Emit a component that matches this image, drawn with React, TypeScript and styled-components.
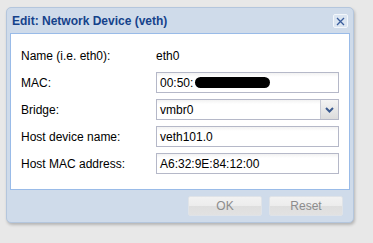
import React from 'react';
import styled, { createGlobalStyle } from 'styled-components';

const GlobalStyle = createGlobalStyle`
  html, body {
    margin: 0;
    padding: 0;
    background: #e8e8e8;
    font-family: "Liberation Sans", Arial, sans-serif;
  }
`;

const Page = styled.div`
  width: 373px;
  height: 243px;
  padding: 7px 0 0 6px;
  box-sizing: border-box;
`;

const Window = styled.div`
  width: 348px;
  height: 216px;
  box-sizing: border-box;
  background: #cfdbea;
  border: 1px solid #b4c6dd;
  border-radius: 5px;
  box-shadow: 1px 2px 3px rgba(0, 0, 0, 0.22);
  display: flex;
  flex-direction: column;
`;

const Header = styled.div`
  height: 25px;
  display: flex;
  align-items: center;
  justify-content: space-between;
  padding: 1px 5px 0 5px;
  box-sizing: border-box;
`;

const Title = styled.span`
  font-size: 12px;
  font-weight: bold;
  color: #15428b;
`;

const CloseButton = styled.button`
  width: 15px;
  height: 14px;
  padding: 0;
  border: 1px solid #f2f6fb;
  border-radius: 2px;
  background: #dbe5f1;
  display: flex;
  align-items: center;
  justify-content: center;
  cursor: pointer;
`;

const Body = styled.div`
  margin: 0 3px;
  height: 157px;
  box-sizing: border-box;
  background: #fff;
  border: 1px solid #99bbe8;
  padding: 11px 9px 0 10px;
  display: flex;
  flex-direction: column;
  gap: 6px;
`;

const Row = styled.div`
  display: flex;
  align-items: center;
  height: 21px;
`;

const Label = styled.label`
  width: 135px;
  font-size: 12px;
  color: #000;
`;

const DisplayValue = styled.span`
  font-size: 12px;
  color: #000;
`;

const Field = styled.div`
  width: 183px;
  height: 21px;
  box-sizing: border-box;
  border: 1px solid #b5b8c8;
  background: #fff linear-gradient(#f2f2f2, #fff 4px);
  display: flex;
  align-items: center;
  padding-left: 3px;
  font-size: 12px;
  color: #000;
`;

const FieldText = styled.span`
  flex: 1;
  display: flex;
  align-items: center;
`;

const Redacted = styled.span`
  display: inline-block;
  margin-left: 2px;
  width: 75px;
  height: 11px;
  border-radius: 6px;
  background: #000;
`;

const Trigger = styled.div`
  width: 17px;
  height: 19px;
  border-left: 1px solid #c8cbd6;
  background: linear-gradient(#f4f4f4, #dcdcdc);
  display: flex;
  align-items: center;
  justify-content: center;
`;

const Footer = styled.div`
  flex: 1;
  display: flex;
  justify-content: flex-end;
  align-items: flex-start;
  gap: 7px;
  padding: 6px 10px 0 0;
`;

const Button = styled.button`
  width: 74px;
  height: 20px;
  border: 1px solid #dfe3e8;
  border-radius: 2px;
  background: linear-gradient(#f2f2f2 0%, #ececec 50%, #dedede 51%, #e2e2e2 100%);
  color: #8c8c8c;
  font-family: "Liberation Sans", Arial, sans-serif;
  font-size: 12px;
  padding: 0;
`;

const App: React.FC = () => (
  <>
    <GlobalStyle />
    <Page>
      <Window>
        <Header>
          <Title>Edit: Network Device (veth)</Title>
          <CloseButton title="Close">
            <svg width="9" height="9" viewBox="0 0 9 9">
              <path d="M1 1L8 8M8 1L1 8" stroke="#3a5d9c" strokeWidth="1.3" />
            </svg>
          </CloseButton>
        </Header>
        <Body>
          <Row>
            <Label>Name (i.e. eth0):</Label>
            <DisplayValue>eth0</DisplayValue>
          </Row>
          <Row>
            <Label>MAC:</Label>
            <Field>
              <FieldText>
                00:50:<Redacted />
              </FieldText>
            </Field>
          </Row>
          <Row>
            <Label>Bridge:</Label>
            <Field>
              <FieldText>vmbr0</FieldText>
              <Trigger>
                <svg width="9" height="6" viewBox="0 0 9 6">
                  <path d="M1 1L4.5 4.5L8 1" stroke="#3b5a8f" strokeWidth="2" fill="none" />
                </svg>
              </Trigger>
            </Field>
          </Row>
          <Row>
            <Label>Host device name:</Label>
            <Field>
              <FieldText>veth101.0</FieldText>
            </Field>
          </Row>
          <Row>
            <Label>Host MAC address:</Label>
            <Field>
              <FieldText>A6:32:9E:84:12:00</FieldText>
            </Field>
          </Row>
        </Body>
        <Footer>
          <Button disabled>OK</Button>
          <Button disabled>Reset</Button>
        </Footer>
      </Window>
    </Page>
  </>
);

export default App;
